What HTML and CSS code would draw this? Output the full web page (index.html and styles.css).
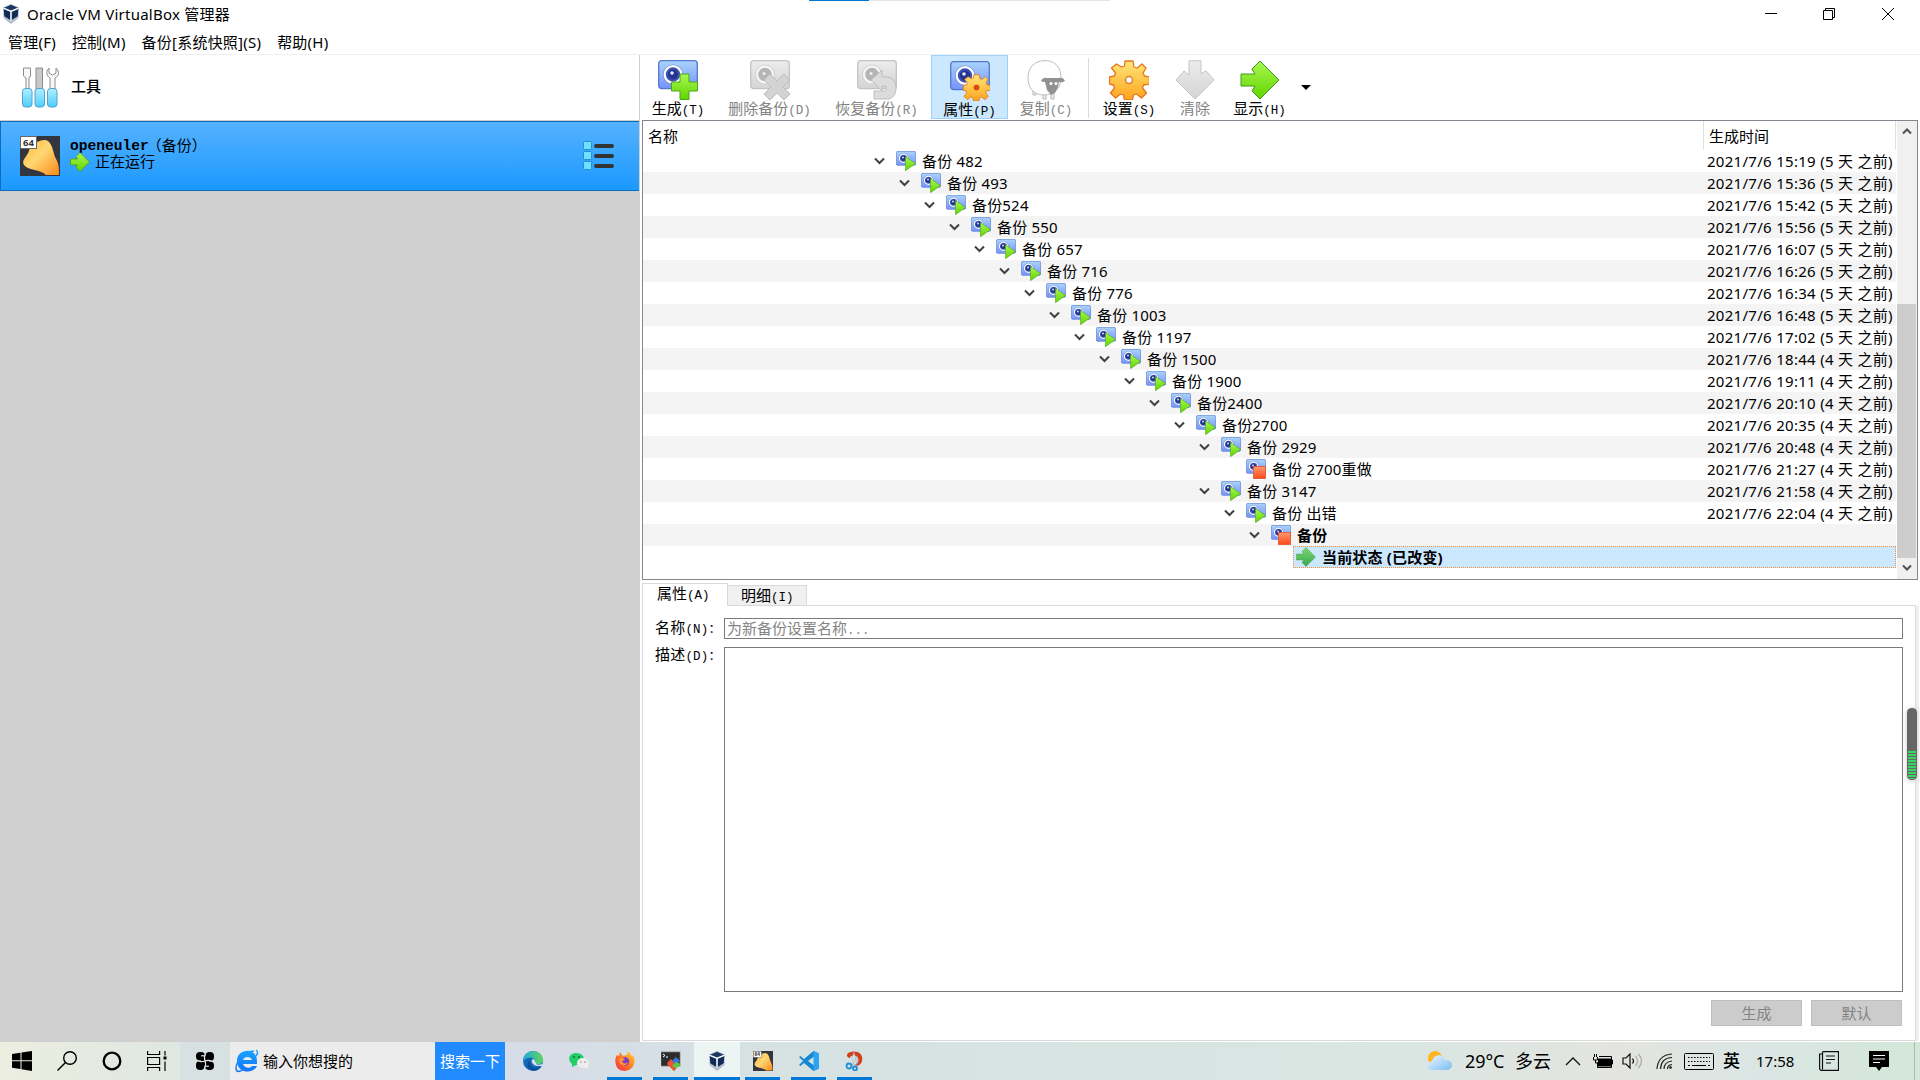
FILE: index.html
```html
<!DOCTYPE html>
<html lang="zh-CN">
<head>
<meta charset="utf-8">
<title>Oracle VM VirtualBox 管理器</title>
<link rel="stylesheet" href="styles.css">
</head>
<body>
<svg class="defs" width="0" height="0">
  <defs>
    <linearGradient id="blue" x1="0" y1="0" x2="0" y2="1"><stop offset="0" stop-color="#a9d4fb"/><stop offset="1" stop-color="#7592fb"/></linearGradient>
    <linearGradient id="green" x1="0" y1="0" x2="0" y2="1"><stop offset="0" stop-color="#a8f850"/><stop offset="1" stop-color="#62d400"/></linearGradient>
    <linearGradient id="teal" x1="0" y1="0" x2="0" y2="1"><stop offset="0" stop-color="#7ad672"/><stop offset="1" stop-color="#3aa849"/></linearGradient>
    <linearGradient id="gold" x1="0" y1="0" x2="0" y2="1"><stop offset="0" stop-color="#ffe678"/><stop offset="1" stop-color="#ffa41e"/></linearGradient>
    <linearGradient id="gray" x1="0" y1="0" x2="0" y2="1"><stop offset="0" stop-color="#ececec"/><stop offset="1" stop-color="#d4d4d4"/></linearGradient>
    <linearGradient id="red" x1="0" y1="0" x2="0" y2="1"><stop offset="0" stop-color="#ff9a6c"/><stop offset="1" stop-color="#fb4a1c"/></linearGradient>
    <linearGradient id="cyan" x1="0" y1="0" x2="0" y2="1"><stop offset="0" stop-color="#b4efff"/><stop offset="1" stop-color="#4fcdfb"/></linearGradient>
    <linearGradient id="amber" x1="0" y1="0" x2="1" y2="1"><stop offset="0" stop-color="#ffb93c"/><stop offset=".45" stop-color="#ffd773"/><stop offset="1" stop-color="#f98a18"/></linearGradient>
    <linearGradient id="edge" x1="0" y1="0" x2="1" y2="0"><stop offset="0" stop-color="#1fa8dc"/><stop offset="1" stop-color="#5fd65a"/></linearGradient>
    <linearGradient id="ie" x1="0" y1="0" x2="0" y2="1"><stop offset="0" stop-color="#18a4ff"/><stop offset="1" stop-color="#1474fb"/></linearGradient>
    <linearGradient id="fire" x1="0" y1="1" x2="1" y2="0"><stop offset="0" stop-color="#f5274d"/><stop offset=".5" stop-color="#ff7a22"/><stop offset="1" stop-color="#ffdf3a"/></linearGradient>
    <linearGradient id="cloud" x1="0" y1="0" x2="1" y2="1"><stop offset="0" stop-color="#eef8ff"/><stop offset="1" stop-color="#7cbcf2"/></linearGradient>
  </defs>
  <symbol id="camera" viewBox="0 0 40 40">
    <rect x=".7" y=".7" width="38.600" height="28" rx="3" fill="url(#blue)" stroke="#5577cc" stroke-width="1.300"/>
    <circle cx="15" cy="14.500" r="10" fill="#6a80c8"/>
    <circle cx="15" cy="14.500" r="8.300" fill="#3a50b4" stroke="#fff" stroke-width="2.200"/>
    <circle cx="15" cy="14.500" r="5" fill="#24348f"/><circle cx="14" cy="13" r="1.800" fill="#dfeaff"/>
  </symbol>
  <symbol id="camera-off" viewBox="0 0 40 40">
    <rect x=".7" y=".7" width="38.600" height="28" rx="3" fill="url(#gray)" stroke="#c3c3c3" stroke-width="1.300"/>
    <circle cx="15" cy="14.500" r="9.500" fill="#bbb" stroke="#cecece"/>
    <circle cx="15" cy="14.500" r="8" fill="#b4b4b4" stroke="#f5f5f5" stroke-width="2.400"/><circle cx="14" cy="13.500" r="1.600" fill="#eee"/>
  </symbol>
  <symbol id="gear" viewBox="0 0 40 40">
    <path d="M16 1h8l1 6 3 1 5-4 4 4-3 5 1.500 3 5 1v7l-6 1-1 3 4 5-5 5-5-4-3 1-1 5h-8l-1-5-3-1-5 4-5-5 4-5-1-3-4-1v-7l5-1 1-3-4-5 5-4 5 3 3-1z" fill="url(#gold)" stroke="#e8731c" stroke-width="1.300" stroke-linejoin="round"/>
    <circle cx="20" cy="20" r="3.500" fill="#fff" stroke="#d98232" stroke-width="1.500"/>
  </symbol>
  <symbol id="arrow" viewBox="0 0 40 40"><path d="M1 14h14l-3-5 8-8 19 19-19 19-8-8 3-5H1z" stroke-linejoin="round"/></symbol>
  <symbol id="snap-run" viewBox="0 0 20 20"><use href="#camera" width="20" height="20"/><path d="M9.500 5.500 19.500 12.500 9.500 19.700z" fill="url(#green)" stroke="#49a81c" stroke-width=".6"/></symbol>
  <symbol id="snap-off" viewBox="0 0 20 20"><use href="#camera" width="20" height="20"/><rect x="7.500" y="7.500" width="12" height="12" fill="url(#red)" stroke="#e5522c" stroke-width=".8"/></symbol>
  <symbol id="vbox" viewBox="0 0 16 20">
    <path d="M8 0 16 3.500 15.500 14 8 20 .5 14 0 3.500z" fill="#b3bdcc"/><path d="M8 .8 14.800 3.700 8 6.600 1.200 3.700z" fill="#1c3764"/>
    <path d="M.8 5 7.300 7.700V16L1.300 12.300zM15.200 5 8.700 7.700V16l6-3.700z" fill="#102b58"/><path d="M.5 4.300 8 7.400l7.500-3.100M8 7.400v9" stroke="#fff" stroke-width="1.200" fill="none"/>
  </symbol>
  <symbol id="openeuler" viewBox="0 0 40 40">
    <rect width="40" height="40" fill="#33363f"/><path d="M17 6c5-2 9-3 12 0 4 4 4 11 7 17 3 5 3 9 3 16H26c-6-6-17-4-22-10-3-5 3-8 5-14 1-5 3-7 8-9z" fill="url(#amber)"/>
    <rect x=".5" y=".5" width="16" height="12" fill="#fff" stroke="#666"/>
  </symbol>
</svg>

<header class="titlebar">
  <svg class="logo" viewBox="0 0 16 20"><use href="#vbox"/></svg>
  <h1>Oracle VM VirtualBox 管理器</h1>
  <div class="loading"><i></i></div>
  <svg class="winbtns" viewBox="0 0 140 28" fill="none" stroke="#000"><path d="M5 13.500h12M63.500 10.500h9v9h-9zM65.500 10.500v-2h9v9h-2M122 8l12 12M134 8l-12 12"/></svg>
</header>
<nav class="menubar"><span>管理(F)</span><span>控制(M)</span><span>备份[系统快照](S)</span><span>帮助(H)</span></nav>

<main>
  <aside class="sidebar">
    <div class="tools">
      <svg width="38" height="42" viewBox="0 0 38 42">
        <g fill="#f7f7f7" stroke="#8d8d8d"><path d="M2.500 1h7v8L8 11v11H5V11L2.500 9z"/><path d="M15 1h6.500v21H15z" fill="#c9c9c9"/><path d="M28 1c-4 4-2 8 1 10v11h5V11c4-2 5-6 1-10v5l-3.500 2L28 6z"/></g>
        <g fill="url(#cyan)" stroke="#4fa3d0"><rect x="1.500" y="21.500" width="9.500" height="18.500" rx="3"/><rect x="14" y="21.500" width="9.500" height="18.500" rx="3"/><rect x="26.500" y="21.500" width="9.500" height="18.500" rx="3"/></g>
      </svg>
      <b>工具</b>
    </div>
    <div class="machine">
      <svg class="os" viewBox="0 0 40 40"><use href="#openeuler"/><text class="bits" x="3" y="10">64</text></svg>
      <div class="info">
        <div class="name"><b class="mono">openeuler</b><span>（备份）</span></div>
        <div class="state"><svg width="20" height="20" fill="url(#green)" stroke="#48971a" stroke-width="1.500"><use href="#arrow"/></svg>正在运行</div>
      </div>
      <svg class="list" viewBox="0 0 32 30"><g fill="#72dfff" stroke="#218fd3"><rect x=".5" y=".5" width="8" height="8" rx="1"/><rect x=".5" y="10.500" width="8" height="8" rx="1"/><rect x=".5" y="20.500" width="8" height="8" rx="1"/></g><path d="M13 5h16M13 15h16M13 25h16" stroke="#333" stroke-width="3.800" stroke-linecap="round"/></svg>
    </div>
  </aside>

  <section class="content">
    <div class="toolbar">
      <button class="w72"><svg viewBox="0 0 40 40"><use href="#camera"/><path d="M22 14h9v8h8.500v9H31v8.500h-9V31h-8.500v-9H22z" fill="url(#green)" stroke="#49a81c"/></svg><span>生成<i>(T)</i></span></button>
      <button class="w107 off"><svg viewBox="0 0 40 40"><use href="#camera-off"/><path d="m20 14 7 7 7-7 6 6-7 7 7 7-6 6-7-7-7 7-6-6 7-7-7-7z" fill="#d3d3d3" stroke="#bdbdbd"/></svg><span>删除备份<i>(D)</i></span></button>
      <button class="w107 off"><svg viewBox="0 0 40 40"><use href="#camera-off"/><path d="M14 20 25 10v7h5c6 0 9 5 9 11s-3 11-9 11H17v-8h12v-5h-4v5z" fill="#dcdcdc" stroke="#bdbdbd"/></svg><span>恢复备份<i>(R)</i></span></button>
      <button class="w77 active"><svg viewBox="0 0 40 40"><use href="#camera"/><use href="#gear" x="13" y="13" width="27" height="27"/><circle cx="26.500" cy="26.500" r="2.800" fill="#d84a10"/></svg><span>属性<i>(P)</i></span></button>
      <button class="w75 off"><svg viewBox="0 0 40 40"><path d="M7 29v6h3v-4M17 34v5h3v-5M25 33v6h3v-6" fill="#eee" stroke="#b5b5b5"/><path d="M18 .7c10-1 17 6 17 17S28 35 18 35 2 28 2 18 8 1 18 .7z" fill="#fff" stroke="#bdbdbd"/><path d="M15 21q2-4 6-3h12q4-1 6 3-3 2-6 1l-1 5-3 6-4 2-4-5-2-8q-3 0-4-1z" fill="#919191"/><circle cx="25" cy="23.500" r="1.500" fill="#fff"/><circle cx="30" cy="23.500" r="1.500" fill="#fff"/></svg><span>复制<i>(C)</i></span></button>
      <hr>
      <button class="w72"><svg viewBox="0 0 40 40"><use href="#gear"/></svg><span>设置<i>(S)</i></span></button>
      <button class="w60 off"><svg viewBox="0 0 40 40"><path d="M14 .8h12v13l5-3 8 9L20 39 1 20l8-9 5 4z" fill="url(#gray)" stroke="#c5c5c5"/></svg><span>清除</span></button>
      <button class="w69"><svg viewBox="0 0 40 40" fill="url(#green)" stroke="#3f9a1c"><use href="#arrow"/></svg><span>显示<i>(H)</i></span></button>
      <svg class="drop" viewBox="0 0 10 5"><path d="M0 0h10L5 5z"/></svg>
    </div>

    <div class="tree">
      <div class="table">
        <div class="thead"><span>名称</span><span>生成时间</span></div>
        <div id="rows"></div>
      </div>
      <div class="scroll"><svg viewBox="0 0 10 8"><path d="m1 6.500 4-4 4 4"/></svg><div class="thumb"></div><svg viewBox="0 0 10 8"><path d="m1 1.500 4 4 4-4"/></svg></div>
    </div>

    <div class="tabs"><div class="tab on">属性<i>(A)</i></div><div class="tab">明细<i>(I)</i></div><div class="rest"></div></div>
    <div class="pane">
      <div class="field"><label>名称<i>(N)：</i></label><div class="input">为新备份设置名称<i>...</i></div></div>
      <div class="field grow"><label>描述<i>(D)：</i></label><div class="area"></div></div>
      <div class="actions"><button>生成</button><button>默认</button></div>
    </div>
  </section>
</main>

<div class="meter"></div>

<footer class="taskbar">
  <div class="cell c44"><svg width="20" height="20"><path d="M0 3 8.500 1.800V9.300H0zM9.500 1.600 20 0v9.300H9.500zM0 10.300h8.500V18L0 16.800zM9.500 10.300H20V20L9.500 18.200z"/></svg></div>
  <div class="cell c46"><svg width="20" height="20" fill="none" stroke="#000" stroke-width="1.400"><circle cx="13" cy="7" r="6.300"/><path d="m8.500 11.500-8 8"/></svg></div>
  <div class="cell c44"><svg width="20" height="20" fill="none" stroke="#000" stroke-width="2.300"><circle cx="10" cy="10" r="8.300"/></svg></div>
  <div class="cell c46"><svg width="20" height="20" fill="none" stroke="#000" stroke-width="1.200"><path d="M.6 0v3.500h12V0M.6 6.500h12v7H.6zM.6 20v-3.500h12V20M18 0v4.500M18 10.500V20"/><path d="M16.500 5.500h3v3h-3z" fill="#000" stroke="none"/></svg></div>
  <div class="cell c50 shade"><svg width="20" height="20"><g fill="#000"><rect x="1" y="1" width="9" height="8.500" rx="4"/><rect x="10.500" y="1" width="8.500" height="9" rx="4"/><rect x="10" y="10.500" width="9" height="8.500" rx="4"/><rect x="1" y="10" width="8.500" height="9" rx="4"/><rect x="6" y="5" width="8" height="10" /></g><path d="M2.500 9.500q4 2 7.500.5t7.500.5M10.500 2.500q-2 4-.5 7.500t-.5 7.500M6 5q3-1 4 1M14 15q-3 1-4-1" fill="none" stroke="#dce6e4" stroke-width="1.100"/></svg></div>
  <div class="search"><svg width="24" height="24" viewBox="0 0 24 24"><path d="M22 15H8c1 4 7 5 9 2h5c-3 8-19 8-20-4S17-2 21 7c1 2 1 5 1 8zM8 11h9c-1-4-8-4-9 0z" fill="url(#ie)"/><path d="M21 1q3 2 0 6M19 2C10 2 1 13 1 19c0 5 4 4 8 1" fill="none" stroke="url(#ie)" stroke-width="1.500"/></svg><span>输入你想搜的</span></div>
  <div class="go">搜索一下</div>
  <div class="apps">
    <div class="app"><svg viewBox="0 0 20 20"><circle cx="10" cy="10" r="10" fill="#1467b8"/><path d="M0 10C0 4 5 0 10 0c6 0 10 4 10 9 0 4-4 5-7 4-2-1 0-2-1-4-1-3-7-4-12 1z" fill="url(#edge)"/><path d="M8 9c-3 3 0 9 6 8 2 0 4-1 5-2-3 5-9 6-12 3-4-3-3-8 1-9z" fill="#0b4f98"/><path d="M11 8c-4 0-3 6 3 7h5c1-1 1-2 0-2-3 1-6 1-6-1z" fill="#d5dee6"/></svg></div>
    <div class="app"><svg viewBox="0 0 20 20"><path d="M7 2c5 0 8 3 8 6s-3 6-8 6l-4 2V13C-2 9 0 2 7 2z" fill="#22cf67"/><circle cx="5" cy="6" r="1" fill="#126c36"/><circle cx="10" cy="6" r="1" fill="#126c36"/><ellipse cx="14" cy="12" rx="6" ry="5" fill="#eee"/><path d="m15 16 4 2v-4z" fill="#eee"/><circle cx="12" cy="11" r=".8" fill="#888"/><circle cx="16" cy="11" r=".8" fill="#888"/></svg></div>
    <div class="app run"><svg viewBox="0 0 20 20"><path d="M2 4l2 1 1-4 3 4 4-1 1-4c2 2 3 4 4 5l1-1c2 4 2 7 1 9-2 8-15 10-18 1C0 10 0 7 2 4z" fill="url(#fire)"/><circle cx="10" cy="10.500" r="4.200" fill="#7a3bcf"/><path d="M4 8c3-2 5-1 6 1l-3 1c1 3 4 3 6 1-1 5-9 5-9-3z" fill="#ff9428"/></svg></div>
    <div class="app run"><svg viewBox="0 0 20 20"><rect y="1" width="19" height="14" fill="#2d2d2d" stroke="#777" stroke-width=".7"/><path d="m2 3 2 1.500L2 6M5 6h2" stroke="#fff" fill="none"/><path d="m6 12 4-4 4 4-4 4z" fill="#f2503b"/><path d="m11 10 4-4 4 4-4 4z" fill="#3d73dd"/><path d="m9 16 6-5 5 2-7 7z" fill="#62c73e"/><path d="m6 13 3-1 6 6-2 2z" fill="#f2503b"/></svg></div>
    <div class="app run current"><svg viewBox="0 0 16 20"><use href="#vbox"/></svg></div>
    <div class="app run"><svg viewBox="0 0 40 40"><use href="#openeuler"/><text class="bits" x="3" y="10">64</text></svg></div>
    <div class="app run"><svg viewBox="0 0 20 20"><path d="M14.500 0 20 2.500v15L14.500 20 5 12l-3.500 3L0 14l4-4-4-4 1.500-1L5 8zM15 5.500 9 10l6 4.500z" fill="#1688d4" fill-rule="evenodd"/><path d="M14.500 0 20 2.500v15L14.500 20z" fill="#2ba5ef"/></svg></div>
    <div class="app run"><svg viewBox="0 0 20 20"><path d="M3 2c8-4 16 0 14 8-1 4-5 6-8 4 5-1 6-7 2-9-3-1-6 0-6 2-3 0-4-3-2-5z" fill="#d2401b"/><path d="m9 1 3 12-3 1L7 7zM12 5l1 6-4 5-2-1z" fill="#dce2e7" stroke="#8f989e" stroke-width=".4"/><g fill="none" stroke="#1d91d8" stroke-width="1.800"><circle cx="4" cy="15" r="2.500"/><circle cx="10" cy="17.500" r="2"/></g></svg></div>
  </div>
  <div class="tray">
    <svg width="26" height="20" viewBox="0 0 26 20"><circle cx="8" cy="7" r="7" fill="#ffb520"/><path d="M6 19c-7 0-7-8-1-9 2-7 11-8 13-1 9-1 9 10 2 10z" fill="url(#cloud)"/></svg>
    <span class="temp">29°C</span><span class="sky">多云</span>
    <svg class="t1" width="16" height="10" fill="none" stroke="#111" stroke-width="1.300"><path d="m1 9 7-7 7 7"/></svg>
    <svg class="t2" width="20" height="14"><path d="M5 4.500h13v8H5z" /><path d="M6 2.500h12.500v11H4.500V8M18.500 6h1v4h-1M.5 3v3h4V3M1.500 3V0M3.500 3V0M2.500 6v3H5" fill="none" stroke="#000"/></svg>
    <svg class="t3" width="22" height="18" fill="none" stroke="#111" stroke-width="1.200"><path d="M1 6h3l4-4v14l-4-4H1zM10.500 6.500q2 2.500 0 5"/><path d="M13.500 4q4 5 0 10M16.500 2q6 7 0 14" stroke="#aaa"/></svg>
    <svg class="t4" width="17" height="17" fill="none" stroke="#222" stroke-width="1.200"><path d="M1 16Q2 2 16 1M4.500 16Q5 5 16 4.500M8 16q0-7 8-8M11.500 16q0-4 4.500-4.500"/><circle cx="14.500" cy="14.500" r="1.300" fill="#111" stroke="none"/></svg>
    <svg class="t5" width="30" height="17" fill="none" stroke="#000"><rect x=".5" y=".5" width="29" height="16" rx="1"/><path d="M4 4.500h22M4 8.500h22" stroke-dasharray="1.500 1.500"/><path d="M4 12.500h2M8 12.500h14M24 12.500h2"/></svg>
    <b class="ime">英</b><span class="clock">17:58</span>
    <svg class="t6" width="20" height="20" fill="none" stroke="#111" stroke-width="1.200"><path d="M3.500.6h16v18.800H2L.6 18V3h3M3.500 1v17.500M7 5h9M7 8.500h9M7 12h5"/></svg>
    <svg class="t7" width="20" height="20"><path d="M0 0h20v16h-7l-3 4-3-4H0z"/><path d="M4 4.500h12M4 8h12M4 11.500h7" stroke="#fff" stroke-width="1.200"/></svg>
    <div class="peek"></div>
  </div>
</footer>
<script src="tree.js"></script>
</body>
</html>
```
FILE: styles.css
```css
* { box-sizing: border-box; }
body { margin: 0; width: 1920px; height: 1080px; overflow: hidden; display: flex; flex-direction: column; background: #fff; color: #000; font: 15px/20px "Noto Sans", "Noto Sans CJK SC", sans-serif; }
svg { display: block; flex: none; }
.defs { position: absolute; }
i { font-style: normal; }
button { border: 0; background: none; padding: 0; color: inherit; font: inherit; }

.titlebar { height: 28px; display: flex; align-items: center; padding: 0 20px 0 3px; }
.logo { width: 16px; height: 20px; }
h1 { margin: 0 0 0 8px; width: 782px; font-size: 15px; font-weight: 400; letter-spacing: .23px; }
.loading { align-self: flex-start; width: 301px; height: 1px; background: #e5e5e5; }
.loading i { display: block; width: 60px; height: 1px; background: #0078d7; }
.winbtns { width: 140px; height: 28px; margin-left: auto; }
.menubar { height: 27px; display: flex; gap: 16px; padding: 4px 8px 0; line-height: 21px; letter-spacing: .22px; border-bottom: 1px solid #f0f0f0; white-space: nowrap; }

main { flex: 1; display: flex; min-height: 0; }
.sidebar { width: 640px; background: #cfcfcf; border-right: 1px solid #cfcfcf; }
.tools { height: 66px; background: #fff; border-bottom: 1px solid #cfcfcf; display: flex; padding: 12px 0 0 21px; gap: 12px; }
.tools b { font-weight: 500; line-height: 38px; }
.machine { height: 70px; border: 1px solid #0a6dbd; border-right: 0; background: linear-gradient(#55b2ff, #1b99ff); display: flex; padding: 14px 24px 0 19px; }
.os { width: 40px; height: 40px; }
.bits { font: 700 9.5px "Noto Sans", sans-serif; fill: #333; }
.info { margin-left: 10px; line-height: 17px; }
.name { display: flex; align-items: center; height: 17px; padding-top: 1px; }
.mono, .toolbar i, .tabs i, .pane i { font-family: "Liberation Mono", "Noto Sans CJK SC", monospace; font-size: 12.5px; }
.name .mono { font-size: 14.6px; padding-top: 2px; }
.name span { margin-left: -2px; }
.state { display: flex; align-items: center; gap: 5px; height: 17px; }
.list { width: 32px; height: 30px; margin: 5px 0 0 auto; }

.content { flex: 1; padding-left: 2px; display: flex; flex-direction: column; min-width: 0; }
.toolbar { height: 65px; display: flex; line-height: 18px; }
.toolbar button { height: 64px; padding-top: 5px; display: flex; flex-direction: column; align-items: center; border: 1px solid transparent; white-space: nowrap; }
.toolbar button > svg { width: 40px; height: 40px; margin-top: -1px; }
.toolbar button > span { margin-top: -1px; }
.toolbar .off, .actions button { color: #838383; }
.toolbar .active { background: #cce8ff; border-color: #99d1ff; }
.toolbar .active > svg { margin-top: 0; }
.w72 { width: 72px; } .w107 { width: 107px; } .w77 { width: 77px; } .w75 { width: 76px; } .w60 { width: 60px; } .w69 { width: 69px; }
.w107 + .w107 { margin-right: 1px; }
.toolbar .w72:first-child { margin-right: 2px; }
.toolbar hr { width: 1px; height: 60px; margin: 3px 4px 0 4px; border: 0; background: #dcdcdc; }
.drop { width: 10px; height: 5px; margin: 30px 0 0 7px; }

.tree { height: 460px; width: 1276px; border: 1px solid #828790; display: flex; }
.table { width: 1253px; display: flex; flex-direction: column; }
.thead { height: 29px; display: flex; line-height: 30px; }
.thead span:first-child { width: 1060px; padding-left: 5px; }
.thead span:last-child { width: 193px; padding-left: 5px; border: solid #e0e0e0; border-width: 0 1px; }
.row { height: 22px; display: flex; align-items: center; white-space: nowrap; line-height: 19px; }
.row:nth-child(even) { background: #f4f4f4; }
.node { width: 1060px; height: 22px; display: flex; align-items: center; padding-left: calc(231px + var(--depth) * 25px); letter-spacing: .18px; }
.node .chev { width: 11px; height: 8px; margin-right: 11px; fill: none; stroke: #404040; stroke-width: 2; }
.node .kind { width: 20px; height: 20px; margin-right: 6px; }
.date { padding-left: 4px; letter-spacing: .29px; }
.bold { font-weight: 700; }
.row.selected { margin-left: 650px; width: 603px; background: #cce8ff; border: 1px dotted #ff8f35; }
.row.selected .node { padding-left: 2px; height: 20px; }
.scroll { width: 20px; margin-left: 1px; background: #f0f0f0; display: flex; flex-direction: column; align-items: center; }
.scroll svg { width: 10px; height: 8px; margin: 6px 0; fill: none; stroke: #505050; stroke-width: 2; }
.thumb { width: 19px; height: 254px; margin-top: 163px; background: #cdcdcd; align-self: flex-start; }

.tabs { height: 26px; display: flex; align-items: flex-end; line-height: 18px; }
.tab { width: 79px; height: 21px; padding-left: 13px; border: 1px solid #d9d9d9; border-left: 0; background: #f0f0f0; }
.tab.on { width: 86px; height: 23px; padding-left: 14px; border-left: 1px solid #d9d9d9; border-bottom: 0; background: #fff; }
.rest { flex: 1; height: 1px; margin-right: 4px; background: #d9d9d9; }
.pane { width: 1274px; flex: 1; margin-bottom: 1px; padding: 12px 12px 14px 12px; border: 1px solid #d9d9d9; border-top: 0; box-shadow: 3px 0 #f0f0f0; display: flex; flex-direction: column; }
.field { display: flex; margin-bottom: 7px; line-height: 19px; }
.field label { width: 69px; white-space: nowrap; letter-spacing: .2px; }
.input { flex: 1; height: 21px; padding-left: 2px; border: 1px solid #7a7a7a; color: #858585; }
.grow { flex: 1; }
.grow label { line-height: 14px; }
.area { flex: 1; border: 1px solid #7a7a7a; }
.actions { display: flex; justify-content: flex-end; gap: 9px; padding-right: 1px; margin-top: 1px; }
.actions button { width: 91px; height: 26px; border: 1px solid #bfbfbf; background: #ccc; }

.meter { position: absolute; left: 1907px; top: 708px; width: 10px; height: 72px; border-radius: 4px; border: 1px solid #666; background: linear-gradient(#666 42px, transparent 42px), repeating-linear-gradient(#38d466 0 2px, #666 2px 3px); box-shadow: 0 1px 5px #ccc; }

.taskbar { height: 38px; display: flex; background: linear-gradient(90deg, #eceee0 0, #dde6e2 200px, #d6dce8 520px, #d6e2e2 760px, #d9e6e2 1400px, #e3e4df 1620px, #dbe6e4 1760px, #d3e7d9); }
.cell { display: flex; align-items: center; justify-content: center; }
.c44 { width: 44px; } .c46 { width: 46px; } .c50 { width: 50px; }
.shade { background: #d7e1e2; }
.search { width: 205px; background: #ececec; display: flex; align-items: center; padding-left: 5px; gap: 4px; }
.go { width: 70px; line-height: 39px; text-align: center; background: #218aff; color: #fff; }
.apps { display: flex; padding-left: 5px; }
.app { width: 46px; display: flex; justify-content: center; align-items: center; position: relative; }
.app svg { width: 20px; height: 20px; }
.run::after { content: ""; position: absolute; left: 5px; bottom: 0; width: 35px; height: 3px; background: #0078d7; }
.current { background: #edf4f4; }
.current::after { left: 0; width: 46px; }
.tray { margin-left: auto; width: 493px; display: flex; align-items: center; }
.temp { width: 50px; margin-left: 12px; font-size: 18px; letter-spacing: -.1px; }
.sky { width: 38px; font-size: 18px; }
.t1 { margin-left: 12px; } .t2 { margin-left: 12px; } .t3 { margin-left: 9px; } .t4 { margin-left: 12px; } .t5 { margin-left: 11px; }
.ime { margin-left: 9px; font-size: 17px; font-weight: 500; }
.clock { margin-left: 16px; width: 41px; }
.t6 { margin-left: 22px; } .t7 { margin-left: 30px; }
.peek { width: 1px; height: 38px; margin-left: auto; margin-right: 5px; background: #a9b8b0; }
```
FILE: tree.js
```js
const snapshots = [
  [0, '备份 482', '2021/7/6 15:19 (5 天 之前)'],
  [1, '备份 493', '2021/7/6 15:36 (5 天 之前)'],
  [2, '备份524', '2021/7/6 15:42 (5 天 之前)'],
  [3, '备份 550', '2021/7/6 15:56 (5 天 之前)'],
  [4, '备份 657', '2021/7/6 16:07 (5 天 之前)'],
  [5, '备份 716', '2021/7/6 16:26 (5 天 之前)'],
  [6, '备份 776', '2021/7/6 16:34 (5 天 之前)'],
  [7, '备份 1003', '2021/7/6 16:48 (5 天 之前)'],
  [8, '备份 1197', '2021/7/6 17:02 (5 天 之前)'],
  [9, '备份 1500', '2021/7/6 18:44 (4 天 之前)'],
  [10, '备份 1900', '2021/7/6 19:11 (4 天 之前)'],
  [11, '备份2400', '2021/7/6 20:10 (4 天 之前)'],
  [12, '备份2700', '2021/7/6 20:35 (4 天 之前)'],
  [13, '备份 2929', '2021/7/6 20:48 (4 天 之前)'],
  [14, '备份 2700重做', '2021/7/6 21:27 (4 天 之前)', 'leaf'],
  [13, '备份 3147', '2021/7/6 21:58 (4 天 之前)'],
  [14, '备份 出错', '2021/7/6 22:04 (4 天 之前)'],
  [15, '备份', '', 'off'],
];

const chevron = (hidden) =>
  `<svg class="chev" viewBox="0 0 11 8"${hidden ? ' visibility="hidden"' : ''}><path d="m1 1.500 4.500 4.500L10 1.500"/></svg>`;

const rows = snapshots.map(([depth, name, date, kind]) => `
  <div class="row">
    <div class="node${kind === 'off' ? ' bold' : ''}" style="--depth:${depth}">
      ${chevron(kind === 'leaf')}
      <svg class="kind"><use href="#${kind ? 'snap-off' : 'snap-run'}"/></svg>${name}
    </div>
    <div class="date">${date}</div>
  </div>`);

rows.push(`
  <div class="row selected">
    <div class="node bold"><svg class="kind" fill="url(#teal)" stroke="#4aa457"><use href="#arrow"/></svg>当前状态 (已改变)</div>
  </div>`);

document.getElementById('rows').innerHTML = rows.join('');
```
